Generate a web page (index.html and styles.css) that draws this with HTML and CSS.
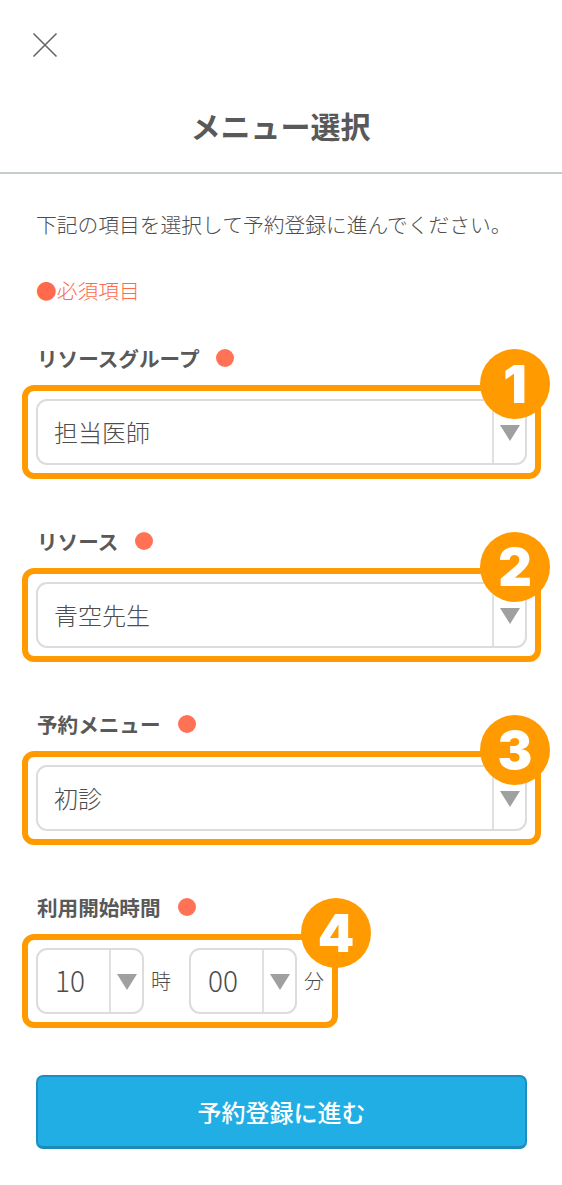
FILE: index.html
```html
<!DOCTYPE html>
<html lang="ja">
<head>
<meta charset="utf-8">
<title>メニュー選択</title>
<link rel="stylesheet" href="styles.css">
</head>
<body>
<header class="header">
  <svg class="close" viewBox="0 0 26 26" width="26" height="26" aria-label="閉じる"><path d="M1.5 1.5 24.5 24.5M24.5 1.5 1.5 24.5"/></svg>
  <h1 class="title">メニュー選択</h1>
</header>
<main class="main">
  <p class="intro">下記の項目を選択して予約登録に進んでください。</p>
  <p class="required">●必須項目</p>

  <div class="label"><span>リソースグループ</span><i class="dot"></i></div>
  <div class="frame">
    <div class="select"><span class="value">担当医師</span><span class="arrow"><svg viewBox="0 0 20 16" width="20" height="16"><path d="M0 0H20L10 16Z"/></svg></span></div>
    <b class="badge">1</b>
  </div>

  <div class="label"><span>リソース</span><i class="dot"></i></div>
  <div class="frame">
    <div class="select"><span class="value">青空先生</span><span class="arrow"><svg viewBox="0 0 20 16" width="20" height="16"><path d="M0 0H20L10 16Z"/></svg></span></div>
    <b class="badge">2</b>
  </div>

  <div class="label"><span>予約メニュー</span><i class="dot"></i></div>
  <div class="frame">
    <div class="select"><span class="value">初診</span><span class="arrow"><svg viewBox="0 0 20 16" width="20" height="16"><path d="M0 0H20L10 16Z"/></svg></span></div>
    <b class="badge">3</b>
  </div>

  <div class="label"><span>利用開始時間</span><i class="dot"></i></div>
  <div class="frame frame-time">
    <div class="select select-time"><span class="value value-time">10</span><span class="arrow"><svg viewBox="0 0 20 16" width="20" height="16"><path d="M0 0H20L10 16Z"/></svg></span></div>
    <span class="unit">時</span>
    <div class="select select-time"><span class="value value-time">00</span><span class="arrow"><svg viewBox="0 0 20 16" width="20" height="16"><path d="M0 0H20L10 16Z"/></svg></span></div>
    <span class="unit unit-last">分</span>
    <b class="badge badge-time">4</b>
  </div>

  <button class="submit" type="button">予約登録に進む</button>
</main>
</body>
</html>
```
FILE: styles.css
```css
* { box-sizing: border-box; }
html, body { margin: 0; padding: 0; }
body {
  width: 562px;
  height: 1185px;
  overflow: hidden;
  background: #fff;
  color: #4d4d4d;
  font-family: "Noto Sans CJK JP", "Noto Sans", sans-serif;
}
.header {
  height: 174px;
  padding-top: 32px;
  border-bottom: 2px solid #c6cccc;
}
.close {
  display: block;
  margin-left: 32px;
  fill: none;
  stroke: #666;
  stroke-width: 1.6;
}
.title {
  margin: 47px 0 0;
  padding-right: 1px;
  font-size: 30px;
  line-height: 40px;
  font-weight: 700;
  text-align: center;
  color: #595959;
}
.main { padding: 35px 35px 0 36px; }
.intro {
  margin: 0;
  font-size: 20.75px;
  line-height: 30px;
  font-weight: 300;
  white-space: nowrap;
}
.required {
  margin: 36px 0 0;
  font-size: 20.75px;
  line-height: 30px;
  font-weight: 300;
  color: #ff6a4d;
}
.label {
  display: flex;
  align-items: center;
  gap: 17px;
  margin-top: 38px;
  padding-left: 1px;
  font-size: 20.6px;
  line-height: 30px;
  font-weight: 700;
  color: #595959;
}
.frame + .label { margin-top: 47px; }
.dot {
  width: 18px;
  height: 18px;
  border-radius: 50%;
  background: #ff7256;
}
.frame {
  position: relative;
  display: flex;
  align-items: center;
  width: 519px;
  height: 94px;
  margin: 12px 0 0 -14px;
  padding: 8px;
  border: 6px solid #ff9b00;
  border-radius: 12px;
}
.frame-time { width: 316px; }
.select {
  display: flex;
  flex: 1;
  height: 66px;
  border: 2px solid #dcdcdc;
  border-radius: 11px;
  background: #fff;
}
.select-time { flex: 0 0 108px; }
.value {
  flex: 1;
  padding-left: 16px;
  font-size: 24px;
  line-height: 61px;
  font-weight: 300;
}
.value-time {
  padding-left: 17px;
  font-size: 28px;
}
.arrow {
  display: flex;
  align-items: center;
  justify-content: center;
  flex: 0 0 33px;
  border-left: 2px solid #e0e0e0;
  padding-top: 2px;
}
.arrow svg { fill: #a0a0a0; display: block; }
.unit {
  margin: -1px 18px 0 7px;
  font-size: 20px;
  font-weight: 300;
}
.unit-last { margin-right: 0; }
.badge {
  position: absolute;
  top: -42px;
  right: -15px;
  width: 70px;
  height: 70px;
  border-radius: 50%;
  background: #ff9b00;
  color: #fff;
  font-family: "Inter", sans-serif;
  font-weight: 900;
  font-size: 52px;
  line-height: 72px;
  text-align: center;
}
.badge-time { right: -39px; }
.submit {
  display: block;
  width: 491px;
  height: 74px;
  margin-top: 47px;
  padding: 0 0 1px;
  border: 2px solid #1b90c0;
  border-bottom: 3px solid #1a8ab8;
  border-radius: 7px;
  background: #21aee5;
  color: #fff;
  font-family: inherit;
  font-size: 24px;
  font-weight: 500;
}
```
